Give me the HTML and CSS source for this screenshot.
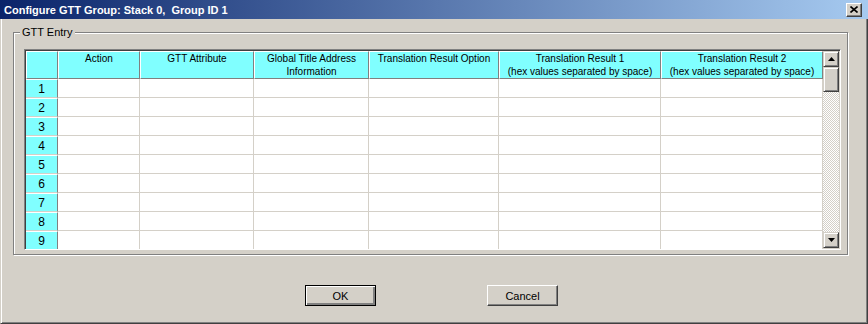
FILE: index.html
```html
<!DOCTYPE html>
<html lang="en">

<head>
    <meta charset="UTF-8">
    <title>Configure GTT Group</title>
    <link rel="stylesheet" href="styles.css">
</head>

<body>
    <div class="window">
        <div class="titlebar">
            <span class="title">Configure GTT Group: Stack 0,&nbsp; Group ID 1</span>
            <button class="close" type="button">
                <svg width="8" height="7" viewBox="0 0 8 7">
                    <path d="M0.5 0.5 L7.5 6.5 M7.5 0.5 L0.5 6.5" stroke="#000" stroke-width="1.6" fill="none"/>
                </svg>
            </button>
        </div>

        <div class="content">
            <div class="groupbox">
                <span class="legend">GTT Entry</span>
                <div class="grid">
                    <table class="entries">
                        <colgroup>
                            <col class="c-num">
                            <col class="c-action">
                            <col class="c-attr">
                            <col class="c-addr">
                            <col class="c-opt">
                            <col class="c-res">
                            <col class="c-res">
                        </colgroup>
                        <thead>
                            <tr>
                                <th></th>
                                <th>Action</th>
                                <th>GTT Attribute</th>
                                <th>Global Title Address<br>Information</th>
                                <th>Translation Result Option</th>
                                <th>Translation Result 1<br>(hex values separated by space)</th>
                                <th>Translation Result 2<br>(hex values separated by space)</th>
                            </tr>
                        </thead>
                        <tbody>
                            <tr><th>1</th><td></td><td></td><td></td><td></td><td></td><td></td></tr>
                            <tr><th>2</th><td></td><td></td><td></td><td></td><td></td><td></td></tr>
                            <tr><th>3</th><td></td><td></td><td></td><td></td><td></td><td></td></tr>
                            <tr><th>4</th><td></td><td></td><td></td><td></td><td></td><td></td></tr>
                            <tr><th>5</th><td></td><td></td><td></td><td></td><td></td><td></td></tr>
                            <tr><th>6</th><td></td><td></td><td></td><td></td><td></td><td></td></tr>
                            <tr><th>7</th><td></td><td></td><td></td><td></td><td></td><td></td></tr>
                            <tr><th>8</th><td></td><td></td><td></td><td></td><td></td><td></td></tr>
                            <tr><th>9</th><td></td><td></td><td></td><td></td><td></td><td></td></tr>
                        </tbody>
                    </table>
                    <div class="scrollbar">
                        <div class="arrow">
                            <svg width="7" height="4" viewBox="0 0 7 4"><polygon points="3.5,0 7,4 0,4" fill="#000"/></svg>
                        </div>
                        <div class="thumb"></div>
                        <div class="track"></div>
                        <div class="arrow">
                            <svg width="7" height="4" viewBox="0 0 7 4"><polygon points="0,0 7,0 3.5,4" fill="#000"/></svg>
                        </div>
                    </div>
                </div>
            </div>

            <div class="buttons">
                <button class="btn default" type="button">OK</button>
                <button class="btn" type="button">Cancel</button>
            </div>
        </div>
    </div>
</body>

</html>
```

FILE: styles.css
```css
body {
    margin: 0;
    font-family: "Liberation Sans", Arial, sans-serif;
    font-size: 11px;
    background-color: #d4d0c8;
}

.window {
    width: 868px;
    height: 324px;
    box-sizing: border-box;
    background-color: #d4d0c8;
    border-left: 1px solid #d4d0c8;
    border-right: 1px solid #404040;
    border-bottom: 1px solid #404040;
    box-shadow: inset 1px 0 0 #fff, inset -1px -1px 0 #808080;
    display: flex;
    flex-direction: column;
}

.titlebar {
    height: 19px;
    margin-left: -1px;
    margin-right: -1px;
    background: linear-gradient(to right, #0a246a, #a6caf0);
    display: flex;
    align-items: center;
    justify-content: space-between;
    padding: 0 6px 0 4px;
}

.title {
    color: #fff;
    font-weight: bold;
    font-size: 11px;
}

.close {
    width: 16px;
    height: 14px;
    padding: 0;
    background-color: #d4d0c8;
    border: 1px solid;
    border-color: #fff #404040 #404040 #fff;
    box-shadow: inset -1px -1px 0 #808080;
    display: flex;
    align-items: center;
    justify-content: center;
}

.content {
    padding: 13px 0 0 12px;
}

.groupbox {
    position: relative;
    width: 835px;
    height: 223px;
    border: 1px solid #808080;
    box-shadow: inset 1px 1px 0 #fff, 1px 1px 0 #fff;
    padding: 16px 0 0 10px;
    box-sizing: border-box;
}

.legend {
    position: absolute;
    top: -7px;
    left: 6px;
    padding: 0 2px;
    background-color: #d4d0c8;
    color: #000;
    line-height: 13px;
}

.grid {
    width: 817px;
    height: 201px;
    box-sizing: border-box;
    border: 1px solid;
    border-color: #808080 #fff #fff #808080;
    box-shadow: inset 1px 1px 0 #404040, inset -1px -1px 0 #d4d0c8;
    padding: 1px;
    display: flex;
    overflow: hidden;
}

.entries {
    table-layout: fixed;
    border-collapse: separate;
    border-spacing: 0;
    width: 798px;
    background-color: #fff;
}

.c-num { width: 32px; }
.c-action { width: 82px; }
.c-attr { width: 114px; }
.c-addr { width: 115px; }
.c-opt { width: 130px; }
.c-res { width: 162px; }

.entries th,
.entries td {
    padding: 0;
    font-weight: normal;
    font-size: 11px;
    color: #000;
    box-sizing: border-box;
}

.entries thead th {
    height: 27px;
    background-color: #80ffff;
    border-top: 1px solid #fff;
    border-left: 1px solid #fff;
    border-right: 1px solid #808080;
    border-bottom: 1px solid #808080;
    vertical-align: top;
    font-size: 10px;
    line-height: 13px;
    text-align: center;
}

.entries tbody th {
    height: 19px;
    background-color: #80ffff;
    border-top: 1px solid #fff;
    border-right: 1px solid #808080;
    border-bottom: 1px solid #d4d0c8;
    text-align: center;
    font-size: 12px;
}

.entries td {
    height: 19px;
    border-right: 1px solid #d4d0c8;
    border-bottom: 1px solid #d4d0c8;
}

.scrollbar {
    width: 16px;
    display: flex;
    flex-direction: column;
}

.arrow,
.thumb {
    box-sizing: border-box;
    background-color: #d4d0c8;
    border: 1px solid;
    border-color: #d4d0c8 #404040 #404040 #d4d0c8;
    box-shadow: inset 1px 1px 0 #fff, inset -1px -1px 0 #808080;
}

.arrow {
    height: 16px;
    display: flex;
    align-items: center;
    justify-content: center;
}

.thumb {
    height: 25px;
}

.track {
    flex: 1;
    background-image: conic-gradient(#d4d0c8 25%, #fff 0 50%, #d4d0c8 0 75%, #fff 0);
    background-size: 2px 2px;
}

.buttons {
    display: flex;
    gap: 111px;
    padding: 30px 0 0 292px;
}

.btn {
    width: 71px;
    height: 21px;
    padding: 0;
    font-family: "Liberation Sans", Arial, sans-serif;
    font-size: 11px;
    color: #000;
    background-color: #d4d0c8;
    border: 1px solid;
    border-color: #fff #404040 #404040 #fff;
    box-shadow: inset -1px -1px 0 #808080;
}

.btn.default {
    border-color: #000;
    box-shadow: inset 1px 1px 0 #fff, inset -2px -2px 0 #808080, inset -1px -1px 0 #404040;
}
```
